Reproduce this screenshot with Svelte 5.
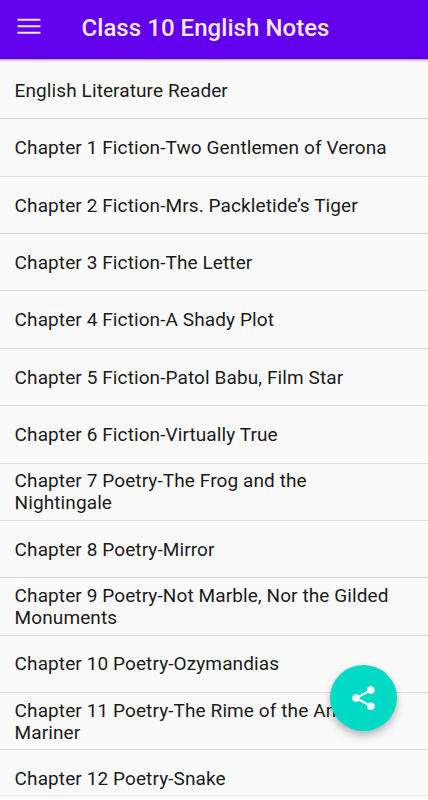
<script>
  const chapters = [
    'English Literature Reader',
    'Chapter 1 Fiction-Two Gentlemen of Verona',
    'Chapter 2 Fiction-Mrs. Packletide’s Tiger',
    'Chapter 3 Fiction-The Letter',
    'Chapter 4 Fiction-A Shady Plot',
    'Chapter 5 Fiction-Patol Babu, Film Star',
    'Chapter 6 Fiction-Virtually True',
    'Chapter 7 Poetry-The Frog and the Nightingale',
    'Chapter 8 Poetry-Mirror',
    'Chapter 9 Poetry-Not Marble, Nor the Gilded Monuments',
    'Chapter 10 Poetry-Ozymandias',
    'Chapter 11 Poetry-The Rime of the Ancient Mariner',
    'Chapter 12 Poetry-Snake'
  ];
</script>

<div class="screen">
  <header>
    <button class="menu" aria-label="Open menu">
      <svg width="24" height="18" viewBox="0 0 24 18">
        <path d="M.5 1.7h23M.5 8.2h23M.5 14.7h23" stroke="#f5e6ff" stroke-width="2.1" />
      </svg>
    </button>
    <h1>Class 10 English Notes</h1>
  </header>
  <ul>
    {#each chapters as chapter}
      <li><span>{chapter}</span></li>
    {/each}
  </ul>
  <button class="share" aria-label="Share">
    <svg width="28" height="28" viewBox="0 0 28 28">
      <path d="M20.8 6.1 6.1 14l14.7 8.2" fill="none" stroke="#fff" stroke-width="2.1" />
      <g fill="#fff">
        <circle cx="20.8" cy="6.1" r="3.8" />
        <circle cx="6.1" cy="14" r="3.8" />
        <circle cx="20.8" cy="22.2" r="3.8" />
      </g>
    </svg>
  </button>
</div>

<style>
  :global(body) {
    background: #fff;
  }
  .screen {
    position: relative;
    width: 428px;
    height: 796px;
    overflow: hidden;
    box-sizing: border-box;
    border-bottom: 1px solid #e8e8e8;
    background: #fafafa;
    font-family: Roboto, sans-serif;
  }
  header {
    display: flex;
    align-items: center;
    height: 59px;
    box-sizing: border-box;
    padding: 0 17px 2px;
    background: #6200ee;
    border-bottom: 1px solid #5300cd;
    box-shadow: 0 1px 0 #cda5f4, 0 2px 0 #e3ccf7, 0 3px 0 #f0eaf6;
  }
  button {
    border: 0;
    padding: 0;
  }
  .menu {
    display: flex;
    background: none;
    margin-top: -2px;
  }
  h1 {
    margin: 0 0 0 40.5px;
    color: #f7e9ff;
    font-size: 24px;
    font-weight: 500;
    line-height: 30px;
    letter-spacing: 0.05px;
    white-space: nowrap;
  }
  ul {
    list-style: none;
    margin: 3px 0 0;
    padding: 0;
  }
  li {
    display: flex;
    align-items: center;
    height: 57.37px;
    box-sizing: border-box;
    padding: 1.4px 24px 0 14.6px;
    border-bottom: 1px solid #dcdcdc;
    color: #1a1a1a;
    font-size: 19px;
    line-height: 22px;
    letter-spacing: 0.1px;
  }
  .share {
    position: absolute;
    left: 330px;
    top: 665px;
    width: 67px;
    height: 66px;
    border-radius: 50%;
    display: flex;
    align-items: center;
    justify-content: center;
    background: #03dac5;
    box-shadow: 0 5px 9px rgba(0, 0, 0, 0.24), 0 1px 5px rgba(0, 0, 0, 0.08);
  }
</style>
